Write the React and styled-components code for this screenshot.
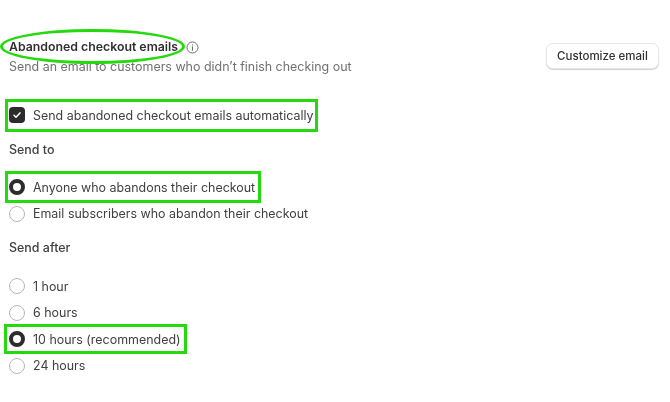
import React from 'react';
import styled, { createGlobalStyle } from 'styled-components';

const GlobalStyle = createGlobalStyle`
  html, body {
    margin: 0;
    padding: 0;
    background: #fff;
  }
  body {
    font-family: Inter, "Liberation Sans", sans-serif;
    -webkit-font-smoothing: antialiased;
  }
`;

const Page = styled.div`
  width: 670px;
  height: 402px;
  box-sizing: border-box;
  padding: 39px 11px 0 9px;
  overflow: hidden;
  filter: blur(0.45px);
`;

const Header = styled.header`
  display: flex;
  justify-content: space-between;
  align-items: center;
`;

const TitleBlock = styled.div`
  display: flex;
  flex-direction: column;
  gap: 4px;
`;

const TitleRow = styled.div`
  display: flex;
  align-items: center;
  gap: 8px;
`;

const Title = styled.h2`
  position: relative;
  margin: 0;
  font-size: 12.3px;
  line-height: 16px;
  font-weight: 600;
  color: #303030;

  &::after {
    content: '';
    position: absolute;
    left: -9px;
    right: -7px;
    top: -10px;
    bottom: -9px;
    border: 3px solid #25da0c;
    border-radius: 50%;
  }
`;

const Subtitle = styled.p`
  margin: 0;
  font-size: 12.45px;
  line-height: 16px;
  color: #707070;
`;

const CustomizeButton = styled.button`
  width: 113px;
  height: 26px;
  margin-bottom: 3px;
  padding: 0;
  border: 1px solid #e6e6e6;
  border-radius: 7px;
  background: #fff;
  box-shadow: 0 1px 1px rgba(0, 0, 0, 0.18);
  font: 500 11.5px Inter, "Liberation Sans", sans-serif;
  color: #303030;
`;

const Rows = styled.div`
  display: flex;
  flex-direction: column;
  align-items: flex-start;
  padding-top: 27px;
`;

const OptionRow = styled.label`
  position: relative;
  display: inline-flex;
  align-items: center;
  gap: 8px;
  height: ${({ $height }) => $height || 26.5}px;
  font-size: 12.45px;
  color: #404040;

  &::after {
    content: '';
    display: ${({ $mark }) => ($mark ? 'block' : 'none')};
    position: absolute;
    inset: ${({ $mark }) => $mark};
    border: 3px solid #25da0c;
  }
`;

const Radio = styled.span`
  box-sizing: border-box;
  width: 16px;
  height: 16px;
  border-radius: 50%;
  background: #fff;
  border: ${({ $on }) => ($on ? '4.5px solid #2c2c2e' : '1px solid #b5b5b5')};
`;

const Checkbox = styled.span`
  display: flex;
  align-items: center;
  justify-content: center;
  width: 16px;
  height: 16px;
  border-radius: 4px;
  background: #2c2c2e;
`;

const GroupLabel = styled.div`
  font-size: 12.45px;
  line-height: 16px;
  font-weight: 500;
  color: #404040;
  margin: ${({ $top }) => $top}px 0 ${({ $bottom }) => $bottom}px;
`;

const InfoIcon = () => (
  <svg width="13" height="13" viewBox="0 0 13 13" fill="none" stroke="#6b6b6b">
    <circle cx="6.5" cy="6.5" r="5.5" strokeWidth="1" />
    <path d="M6.5 5.8v3.4" strokeWidth="1.1" strokeLinecap="round" />
    <circle cx="6.5" cy="3.9" r="0.6" fill="#6b6b6b" stroke="none" />
  </svg>
);

const CheckIcon = () => (
  <svg width="10" height="10" viewBox="0 0 10 10" fill="none">
    <path d="M2 5.3l2 2 4-4.4" stroke="#fff" strokeWidth="1.5" strokeLinecap="round" strokeLinejoin="round" />
  </svg>
);

const Option = ({ on, mark, children }) => (
  <OptionRow $mark={mark}>
    <Radio $on={on} />
    {children}
  </OptionRow>
);

export default function App() {
  return (
    <Page>
      <GlobalStyle />
      <Header>
        <TitleBlock>
          <TitleRow>
            <Title>Abandoned checkout emails</Title>
            <InfoIcon />
          </TitleRow>
          <Subtitle>Send an email to customers who didn’t finish checking out</Subtitle>
        </TitleBlock>
        <CustomizeButton>Customize email</CustomizeButton>
      </Header>

      <Rows>
        <OptionRow $mark="-3.5px -5px -3.5px -4px" $height={26}>
          <Checkbox>
            <CheckIcon />
          </Checkbox>
          Send abandoned checkout emails automatically
        </OptionRow>
        <GroupLabel $top={14} $bottom={16}>Send to</GroupLabel>
        <Option on mark="-2.75px -6px -2.75px -4px">Anyone who abandons their checkout</Option>
        <Option>Email subscribers who abandon their checkout</Option>
        <GroupLabel $top={13} $bottom={17}>Send after</GroupLabel>
        <Option>1 hour</Option>
        <Option>6 hours</Option>
        <Option on mark="-1.75px -6px -1.75px -5px">10 hours (recommended)</Option>
        <Option>24 hours</Option>
      </Rows>
    </Page>
  );
}
